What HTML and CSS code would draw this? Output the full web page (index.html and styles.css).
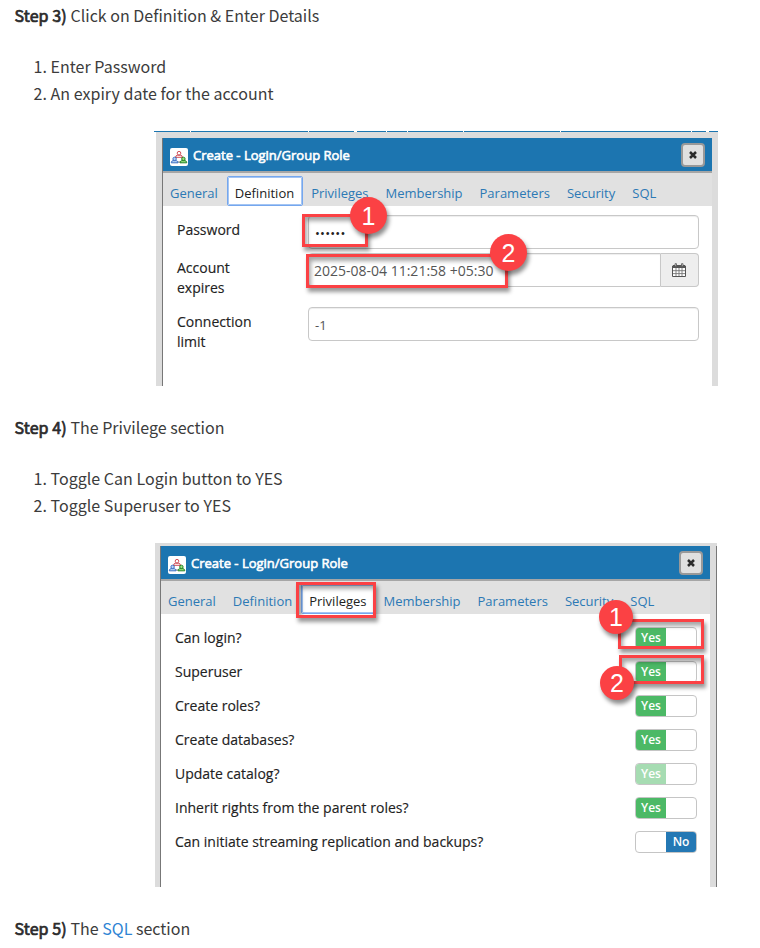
FILE: index.html
```html
<!DOCTYPE html>
<html lang="en">
<head>
<meta charset="utf-8">
<title>Create a login role</title>
<link rel="stylesheet" href="styles.css">
</head>
<body>
<svg class="defs" width="0" height="0" aria-hidden="true">
  <symbol id="roles" viewBox="0 0 18 18">
    <path d="M8 7 L4.5 12 M10 7 L13.5 12 M6 14 H12" stroke="#777" stroke-width="1" fill="none"/>
    <g fill="#fff" stroke="#d04a54"><path d="M5.5 9.3 Q5.7 7.4 7.4 7.2 H10.6 Q12.3 7.4 12.5 9.3 Z"/><circle cx="9" cy="5.2" r="1.8"/></g>
    <g fill="#b8d4f4" stroke="#3d6fc4"><path d="M1.2 14.8 Q1.4 12.8 3 12.6 H6.2 Q7.8 12.8 8 14.8 Z"/><circle cx="4.6" cy="10.9" r="1.7"/></g>
    <g fill="#9be27c" stroke="#23842b"><path d="M10 14.8 Q10.2 12.8 11.8 12.6 H15 Q16.6 12.8 16.8 14.8 Z"/><circle cx="13.4" cy="10.9" r="1.7"/></g>
  </symbol>
</svg>
<main class="article">
  <p class="step"><b>Step 3)</b> Click on Definition &amp; Enter Details</p>
  <ol class="list"><li>Enter Password</li><li>An expiry date for the account</li></ol>

  <figure class="shot shot-definition">
    <div class="backdrop-line"></div>
    <div class="dialog">
      <header class="titlebar">
        <svg class="role-icon"><use href="#roles"/></svg>
        <span class="title">Create - Login/Group Role</span>
        <span class="close"><svg viewBox="0 0 8 8" width="8" height="8"><path d="M1 1 L7 7 M7 1 L1 7" stroke="#2b2b2b" stroke-width="2.5"/></svg></span>
      </header>
      <nav class="tabs"><span>General</span><span class="active">Definition</span><span>Privileges</span><span>Membership</span><span>Parameters</span><span>Security</span><span>SQL</span></nav>
      <div class="form">
        <div class="field"><label>Password</label><div class="input dots">••••••</div></div>
        <div class="field tall"><label>Account<br>expires</label><div class="input date">2025-08-04 11:21:58 +05:30</div><div class="addon">
          <svg width="14" height="14" viewBox="0 0 14 14"><path d="M.5 3 H13.5 V13.5 H.5Z" fill="#fff" stroke="#555"/><path d="M1 2 H13 V5 H1Z" fill="#555"/><path d="M1 7.7 H13 M1 10.6 H13 M4 5 V13 M7 5 V13 M10 5 V13" stroke="#777" stroke-width=".9"/><path d="M3 .7 H4.5 V3.3 H3Z M9.5 .7 H11 V3.3 H9.5Z" fill="#ddd" stroke="#555" stroke-width=".8"/></svg></div></div>
        <div class="field tall"><label>Connection<br>limit</label><div class="input">-1</div></div>
      </div>
    </div>
    <div class="mark mark-password"></div>
    <div class="mark mark-date"></div>
    <div class="badge badge-password">1</div>
    <div class="badge badge-date">2</div>
  </figure>

  <p class="step"><b>Step 4)</b> The Privilege section</p>
  <ol class="list"><li>Toggle Can Login button to YES</li><li>Toggle Superuser to YES</li></ol>

  <figure class="shot shot-privileges">
    <div class="dialog">
      <header class="titlebar">
        <svg class="role-icon"><use href="#roles"/></svg>
        <span class="title">Create - Login/Group Role</span>
        <span class="close"><svg viewBox="0 0 8 8" width="8" height="8"><path d="M1 1 L7 7 M7 1 L1 7" stroke="#2b2b2b" stroke-width="2.5"/></svg></span>
      </header>
      <nav class="tabs"><span>General</span><span>Definition</span><span class="active">Privileges</span><span>Membership</span><span>Parameters</span><span>Security</span><span>SQL</span></nav>
      <div class="options">
        <div class="option"><label>Can login?</label><div class="switch"><span class="yes">Yes</span></div></div>
        <div class="option"><label>Superuser</label><div class="switch"><span class="yes">Yes</span></div></div>
        <div class="option"><label>Create roles?</label><div class="switch"><span class="yes">Yes</span></div></div>
        <div class="option"><label>Create databases?</label><div class="switch"><span class="yes">Yes</span></div></div>
        <div class="option"><label>Update catalog?</label><div class="switch"><span class="yes faded">Yes</span></div></div>
        <div class="option"><label>Inherit rights from the parent roles?</label><div class="switch"><span class="yes">Yes</span></div></div>
        <div class="option"><label>Can initiate streaming replication and backups?</label><div class="switch"><span class="no">No</span></div></div>
      </div>
    </div>
    <div class="mark mark-tab"></div>
    <div class="mark mark-login"></div>
    <div class="mark mark-super"></div>
    <div class="badge small badge-login">1</div>
    <div class="badge small badge-super">2</div>
  </figure>

  <p class="step"><b>Step 5)</b> The <a>SQL</a> section</p>
</main>
</body>
</html>
```
FILE: styles.css
```css
* { box-sizing: border-box; }
body { margin: 0; background: #fff; }
.defs { position: absolute; }
.article {
  height: 948px; padding: 2px 0 0 14px; overflow: hidden;
  font: 400 16px/27px "Noto Sans CJK SC", "Noto Sans", sans-serif; color: #3c3c3c;
}
.step { margin: 0; height: 27px; padding-left: .5px; white-space: nowrap; }
.step b { font-weight: 400; color: #2b2b2b; letter-spacing: .12px; -webkit-text-stroke: .7px #2b2b2b; }
.step a { color: #2f84d4; }
.list { margin: 24px 0; padding: 0 0 0 36.5px; letter-spacing: .03px; }
.list li { height: 27px; white-space: nowrap; }

.shot { position: relative; background: #dcdcdc; font-family: "Open Sans", sans-serif; }
.shot-definition { width: 562px; height: 255px; margin: 0 0 28px 142px; padding: 7px 6px 0; }
.shot-privileges { width: 562px; height: 344px; margin: 0 0 28px 141px; padding: 3px 7px 0 5px; }
.shot-privileges::after { content: ""; position: absolute; right: 0; top: 3px; bottom: 0; width: 1px; background: #777; }
.backdrop-line {
  position: absolute; left: -2px; top: 0; width: 564px; height: 1px;
  background: linear-gradient(90deg, #1c75b0 36px, #fff 36px 37px, #1c75b0 37px 154px, #fff 154px 155px, #1c75b0 155px 200px, #fff 200px 203px, #1c75b0 203px 232px, #fff 232px 233px, #1c75b0 233px 253px, #fff 253px 254px, #1c75b0 254px 309px, #fff 309px 310px, #1c75b0 310px 406px, #fff 406px 407px, #1c75b0 407px 537px, #fff 537px 538px, #1c75b0 538px 552px, #fff 552px 555px, #1c75b0 555px);
}
.dialog { height: 100%; border-left: 1px solid #777; background: #fff; }
.titlebar { display: flex; align-items: center; height: 35px; padding: 0 7px; background: #1c75b0; border-bottom: 2px solid #a6a6a6; }
.role-icon { width: 18px; height: 18px; margin-top: 4px; background: #fff; border-radius: 2px; }
.title { margin: 1px 0 0 5px; color: #fff; font-size: 13px; line-height: 20px; -webkit-text-stroke: .6px #fff; white-space: nowrap; }
.close { display: flex; align-items: center; justify-content: center; width: 24px; height: 24px; margin: 1px 0 0 auto; border: 2px solid #999; border-radius: 4px; background: #e0e0e0; }
.tabs { display: flex; align-items: flex-end; height: 33px; background: #e1e1e1; }
.tabs span { height: 29px; padding: 0 8px 0 7px; border: 1px solid transparent; border-left-width: 0; margin-right: 1px; font-size: 13px; line-height: 31px; color: #2c79b5; white-space: nowrap; }
.tabs .active { height: 30px; line-height: 32px; margin-left: -1px; border: 1px solid #75a7ee; outline: 1px solid #a4c5f3; outline-offset: -2px; background: #fff; color: #222; border-radius: 2px; }

.form { padding: 9px 13px 0 14px; }
.field { display: flex; height: 34px; margin-bottom: 4px; }
.field.tall { height: 50px; }
.field label { width: 131px; padding-top: 5px; font-size: 14px; line-height: 20px; color: #222; -webkit-text-stroke: .15px #222; }
.input { flex: 1; height: 34px; padding-left: 6px; border: 1px solid #c8c8c8; border-radius: 4px; box-shadow: inset 0 1px 1px #eee; font-size: 13px; line-height: 34px; color: #555; }
.dots { color: #222; letter-spacing: .2px; }
.date { padding-left: 5px; border-radius: 4px 0 0 4px; font-size: 14px; line-height: 33px; }
.addon { display: flex; align-items: center; justify-content: center; width: 38px; height: 34px; padding-right: 1px; border: 1px solid #c8c8c8; border-left: 0; border-radius: 0 4px 4px 0; background: #eee; }

.options { padding: 7px 13px 0 14px; }
.option { display: flex; justify-content: space-between; height: 34px; font-size: 14px; line-height: 34px; color: #222; -webkit-text-stroke: .15px #222; }
.switch { display: flex; width: 62px; height: 22px; margin-top: 6px; border: 1px solid #c5c5c5; border-radius: 4px; overflow: hidden; font-size: 12px; line-height: 20px; font-weight: 600; text-align: center; color: #fff; -webkit-text-stroke: 0; }
.yes { width: 30px; background: #4cb966; }
.faded { background: #a6dcb2; }
.no { width: 30px; margin-left: auto; background: #2478b4; }

.mark { position: absolute; border: 3px solid #fb4144; box-shadow: 2px 4px 4px rgba(0,0,0,.4), inset 2px 4px 4px rgba(0,0,0,.35); }
.badge { position: absolute; width: 37px; height: 37px; border-radius: 50%; background: #fb4144; box-shadow: 2px 4px 4px rgba(0,0,0,.45); color: #fff; font: 25px/38px "Liberation Sans", sans-serif; text-align: center; }
.badge.small { width: 34px; height: 34px; line-height: 35px; }
.mark-password { left: 146px; top: 83px; width: 66px; height: 33px; }
.mark-date { left: 150px; top: 123px; width: 202px; height: 34px; }
.badge-password { left: 194px; top: 66px; }
.badge-date { left: 334px; top: 103px; }
.mark-tab { left: 141px; top: 39px; width: 80px; height: 36px; }
.mark-login { left: 463px; top: 76px; width: 86px; height: 30px; }
.mark-super { left: 464px; top: 112px; width: 85px; height: 29px; }
.badge-login { left: 444px; top: 57px; }
.badge-super { left: 445px; top: 123px; }
```
